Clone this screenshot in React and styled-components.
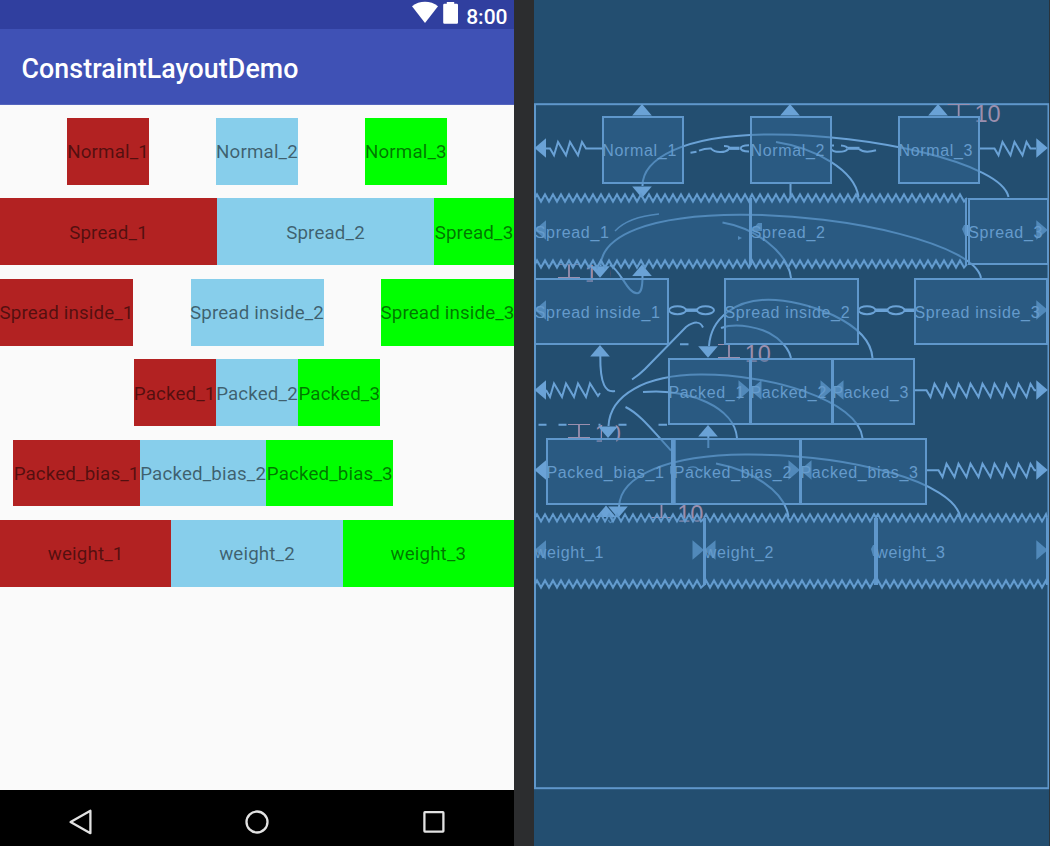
import React from "react";
import styled, { createGlobalStyle } from "styled-components";

const GlobalStyle = createGlobalStyle`
  html, body { margin: 0; padding: 0; background: #2c2d2f; }
  body { overflow: hidden; }
  * { box-sizing: border-box; }
`;

const Editor = styled.main`
  display: flex;
  gap: 20px;
  width: 1050px;
  height: 846px;
  background: #2c2d2f;
  overflow: hidden;
`;

/* ---------- Design preview ---------- */

const Phone = styled.section`
  display: flex;
  flex-direction: column;
  flex: none;
  width: 514px;
  height: 846px;
  background: #fafafa;
  font-family: Roboto, sans-serif;
`;

const StatusBar = styled.header`
  display: flex;
  justify-content: flex-end;
  align-items: flex-start;
  height: 29px;
  padding-right: 6.5px;
  background: #303f9f;
  color: #fff;
`;

const StatusIcons = styled.svg`
  display: block;
  width: 48px;
  height: 29px;
  margin-right: 6px;
`;

const Clock = styled.span`
  padding-top: 5px;
  font-size: 21px;
  font-weight: 500;
  line-height: 24px;
`;

const AppBar = styled.div`
  display: flex;
  align-items: center;
  height: 75.5px;
  padding: 5px 0 0 21.5px;
  background: #3f51b5;
  border-bottom: 1px solid #5565bd;
  color: #fff;
  font-size: 26.77px;
  font-weight: 500;
  letter-spacing: 0.09px;
`;

const Content = styled.div`
  display: flex;
  flex-direction: column;
  flex: 1;
  gap: 13.5px;
  padding-top: 13.5px;
`;

const ChainRow = styled.div`
  display: flex;
  height: 66.9px;
  justify-content: ${(p) => p.$justify || "flex-start"};
  padding-left: ${(p) => p.$indent || 0}px;
`;

const swatches = ["#b22222", "#87ceeb", "#00ff00"];

const Cell = styled.div`
  display: flex;
  align-items: center;
  justify-content: center;
  flex: ${(p) => (p.$width ? "none" : "1 1 0")};
  width: ${(p) => (p.$width ? p.$width + "px" : "auto")};
  padding-top: 2px;
  background: ${(p) => swatches[p.$tone]};
  color: rgba(0, 0, 0, 0.54);
  font-size: 18.74px;
  letter-spacing: 0.15px;
  white-space: nowrap;
`;

const NavBar = styled.nav`
  display: flex;
  justify-content: space-between;
  align-items: center;
  height: 56px;
  padding: 7px 66.5px 0;
  background: #000;
`;

const NavIcon = styled.svg`
  display: block;
  width: 28px;
  height: 28px;
  fill: none;
  stroke: #e2e2e2;
  stroke-width: 2.3;
  stroke-linejoin: round;
`;

const chains = [
  { name: "Normal", justify: "space-evenly", widths: [81.4, 81.4, 81.4] },
  { name: "Spread", widths: [217, 217, 80] },
  { name: "Spread inside", justify: "space-between", widths: [133, 133, 133] },
  { name: "Packed", justify: "center", widths: [82.3, 82.3, 82.3] },
  { name: "Packed_bias", indent: 13.3, widths: [126.6, 126.6, 126.6] },
  { name: "weight", widths: [0, 0, 0] },
];

/* ---------- Blueprint ---------- */

const Blueprint = styled.section`
  position: relative;
  flex: none;
  width: 516px;
  height: 846px;
  background: #234e70;
  font-family: "Liberation Sans", sans-serif;
`;

const Wires = styled.svg`
  position: absolute;
  inset: 0;
  width: 516px;
  height: 846px;
  fill: none;
  stroke: #6aa2d6;
  stroke-width: 2;
`;

const Node = styled.div`
  position: absolute;
  left: ${(p) => p.$x - 534}px;
  top: ${(p) => p.$y}px;
  width: ${(p) => p.$w}px;
  height: ${(p) => p.$h}px;
  display: flex;
  align-items: center;
  padding-top: 3px;
  background: rgba(51, 107, 154, 0.45);
  border: solid #5f97cb;
  border-width: ${(p) => (p.$elastic ? "0 2px" : "2px")};
`;

const NodeLabel = styled.span`
  margin-left: -1.3px;
  color: #659bcc;
  font-size: 16px;
  letter-spacing: 0.68px;
  white-space: nowrap;
`;

const Arrow = ({ x, y, dir, halo }) => {
  const angle = { up: 0, right: 90, down: 180, left: 270 }[dir];
  return (
    <g transform={`translate(${x} ${y}) rotate(${angle})`} stroke="none">
      {halo && <rect x={-halo[1]} y="-5" width={halo[0] + halo[1]} height="18" rx="1" fill="#234e70" />}
      <path d="M0 0L9.8 11.5H-9.8Z" fill="#6aa2d6" />
    </g>
  );
};

const Margin = ({ x, y }) => (
  <g stroke="#9b8fae">
    <path d={`M${x - 11} ${y}H${x + 11}M${x - 11} ${y + 13}H${x + 11}`} strokeWidth="1.2" />
    <path d={`M${x} ${y}V${y + 13}`} strokeWidth="1.8" />
    <text x={x + 15.8} y={y + 17.5} fill="#9b8fae" stroke="none" fontSize="23.5">
      10
    </text>
  </g>
);

const spring = (x0, x1, start, teeth, y) => {
  let d = `M${x0} ${y}H${start}`;
  for (let i = 0; i < teeth; i++) {
    d += `L${start + 4 + i * 12} ${y + 6.7}L${start + 8 + i * 12} ${y - 6.5}`;
  }
  return d + `L${start + teeth * 12} ${y}H${x1}`;
};

const weave = (x0, x1, y) => {
  let d = `M${x0} ${y}`;
  let up = true;
  for (let x = x0 + 2; x <= x1 - 1; x += 4) {
    d += `L${x} ${up ? y - 3.6 : y + 3.6}`;
    up = !up;
  }
  return d + `L${x1} ${y}`;
};

const weaves = [
  [535, 751, 198],
  [750, 967, 198],
  [535, 751, 264],
  [750, 967, 264],
  [535, 705, 517.8],
  [704, 876, 517.8],
  [876, 1047, 517.8],
  [535, 705, 584],
  [704, 876, 584],
  [876, 1047, 584],
];

const nodes = [
  ["Normal_1", 601.5, 115.5, 82, 68],
  ["Normal_2", 749.7, 115.5, 82, 68],
  ["Normal_3", 897.7, 115.5, 82, 68],
  ["Spread_1", 534, 198, 217, 66.5, true],
  ["Spread_2", 750, 198, 217, 66.5, true],
  ["Spread_3", 967.5, 197.5, 81, 67.5],
  ["Spread inside_1", 534, 277.7, 135.3, 67.6],
  ["Spread inside_2", 723.7, 277.7, 135.6, 67.6],
  ["Spread inside_3", 913.7, 277.7, 134.6, 67.6],
  ["Packed_1", 667.7, 357.7, 83, 67.6],
  ["Packed_2", 749.7, 357.7, 83, 67.6],
  ["Packed_3", 831.7, 357.7, 83.5, 67.6],
  ["Packed_bias_1", 545.7, 437.5, 127.7, 67.6],
  ["Packed_bias_2", 673, 437.5, 128, 67.6],
  ["Packed_bias_3", 799.7, 437.5, 127.7, 67.6],
  ["weight_1", 534, 518, 171, 66.5, true],
  ["weight_2", 704, 518, 171.7, 66.5, true],
  ["weight_3", 875.5, 518, 172, 66.5, true],
];

const curves = [
  "M642.5 186C642.5 160 680 135 770 134.5C870 134 1002 163 1008.5 197",
  "M776 142C815 148 855 170 858.5 197",
  "M790.5 183V198",
  "M600.5 266C602 235 650 215 740 214.7C850 214.5 975 245 981 278",
  "M722.5 222.5C755 228 788 252 791 278",
  "M610 265C622 272 627 293 637 293.3C642 293 642.5 285 642.5 276",
  "M709 346C711 318 735 300 768 299.7C805 299.5 870 322 872.5 358",
  "M721 328C735 323 762 326 777 338Q789 348 791 358",
  "M703 327.5Q699 318 686 327L645 369Q639 375 632 379.5",
  "M600.3 356C600 385 606 393 615 391",
  "M608.5 426C610 395 645 375 700 374.6C770 374 858 400 862.5 438",
  "M643 392C690 388 735 408 737 438",
  "M625.5 407C640 414 652 430 671 450.5",
  "M708.3 436V448",
  "M619 507C620 475 670 455 745 454.6C850 454 955 482 960.5 518",
  "M716 463.5C750 470 785 490 788.5 517",
];

const edgeArrows = [148, 230, 310, 390, 470, 550];

const anchors = [
  [642, 104, "up"],
  [790, 104, "up"],
  [938, 104, "up"],
  [600, 277.7, "down", [7, 10]],
  [608, 438, "down", [6, 8]],
  [642, 198, "down"],
  [642, 264.5, "up"],
  [600, 345, "up"],
  [708, 357.7, "down"],
  [708, 425, "up"],
  [606, 505.5, "up"],
  [618, 518, "down"],
  [750, 390, "right"],
  [750, 390, "left"],
  [832, 390, "right"],
  [832, 390, "left"],
  [800, 470, "right"],
  [800, 470, "left"],
  [704, 550, "right"],
  [704, 550, "left"],
];

export default function App() {
  return (
    <Editor>
      <GlobalStyle />
      <Phone>
        <StatusBar>
          <StatusIcons viewBox="0 0 48 29" fill="#fff">
            <path d="M0 6.2C7.5 .4 18.5 .4 26 6.2L13 23Z" />
            <path d="M31.2 5Q31.2 3.8 32.4 3.8H34.8V2H42.2V3.8H44.8Q46 3.8 46 5V22.6Q46 23.8 44.8 23.8H32.4Q31.2 23.8 31.2 22.6Z" />
          </StatusIcons>
          <Clock>8:00</Clock>
        </StatusBar>
        <AppBar>ConstraintLayoutDemo</AppBar>
        <Content>
          {chains.map((chain) => (
            <ChainRow key={chain.name} $justify={chain.justify} $indent={chain.indent}>
              {chain.widths.map((w, i) => (
                <Cell key={i} $tone={i} $width={w}>
                  {`${chain.name}_${i + 1}`}
                </Cell>
              ))}
            </ChainRow>
          ))}
        </Content>
        <NavBar>
          <NavIcon viewBox="0 0 28 28">
            <path d="M3.6 14L23.4 2.8V25.2Z" />
          </NavIcon>
          <NavIcon viewBox="0 0 28 28">
            <circle cx="14" cy="14" r="10.5" />
          </NavIcon>
          <NavIcon viewBox="0 0 28 28">
            <rect x="4.4" y="4.2" width="19" height="19.4" rx=".5" />
          </NavIcon>
        </NavBar>
      </Phone>

      <Blueprint>
        <Wires viewBox="534 0 516 846">
          <rect x="535" y="104.2" width="513.5" height="684" stroke="#5f97cb" strokeWidth="2" />
          <rect x="1049.2" y="0" width=".8" height="846" fill="#2c2d2f" stroke="none" />

          <path d="M538.5 424.8H546.5M558.5 424.8H566.5M598.5 424.8H600.5M618.5 424.8H626.5M658.5 424.8H667M680 344.3H688.5" />

          <Margin x={958.7} y={104.5} />
          <Margin x={569} y={264.5} />
          <Margin x={729} y={344.5} />
          <Margin x={579} y={424.5} />
          <Margin x={661.5} y={504.5} />

          {edgeArrows.map((y) => (
            <g key={y}>
              <Arrow x={534.5} y={y} dir="left" />
              <Arrow x={1047.8} y={y} dir="right" />
            </g>
          ))}
          {anchors.map(([x, y, dir, halo]) => (
            <Arrow key={`${x}${y}${dir}`} x={x} y={y} dir={dir} halo={halo} />
          ))}

          {curves.map((d) => (
            <path key={d} d={d} />
          ))}
          <path d="M615 231Q628 217 659 214" strokeWidth="1.3" />

          <path d={spring(546, 602, 550, 3, 148.5)} />
          <path d={spring(979, 1036, 994.5, 3, 148.5)} />
          <path d="M546 390L550 397L554 383.5L562 397L566 383.5L574 397L578 383.5L586 397L590 383.5L598 396L600 393" />
          <path d={spring(915, 1036, 926.5, 9, 390.3)} />
          <path d={spring(927, 1036, 938.5, 8, 470.3)} />

          <g>
            <ellipse cx="677.5" cy="310.2" rx="8.5" ry="4" />
            <ellipse cx="705.5" cy="310.2" rx="8.5" ry="4" />
            <path d="M686 310.2H697" strokeWidth="3.4" />
            <ellipse cx="867" cy="310.2" rx="8.5" ry="4" />
            <ellipse cx="896" cy="310.2" rx="8.5" ry="4" />
            <path d="M876 310.2H887M904 310.2H914" strokeWidth="3.4" />
            <path d="M690.5 152.7L696.5 151.7M699 150.6Q705 148.4 711 148.6C715 153 725 153 728.5 149.5M724 146Q730 146 729 148.5M749 145.2C738 145 738 151.5 749 151.5" />
            <path d="M728 148.3H739.5" strokeWidth="3.2" />
            <path d="M831 145.5H834M841 145.5Q847 146 847.5 148.5M831 149C833 152.8 845 152.8 847.5 149M859 149C863 152.5 871 151.7 876 150.3" />
            <path d="M847.5 148.3H859.5" strokeWidth="3" />
          </g>

          <path d="M608 516Q612 513 613 518Q611 526 608.5 520M688 468Q695 465.5 698 469Q701 471 703 469.5" strokeWidth="1.2" />

          <g fill="#6aa2d6" stroke="none">
            <path d="M670 466H675V479H673L670 473ZM871 549L873 545H877V556H873ZM962 229L964 225H968V236H965ZM751 231L758 223H762V231ZM738 236L742 238L738 240Z" />
          </g>
        </Wires>

        {nodes.map(([label, x, y, w, h, elastic]) => (
          <Node key={label} $x={x} $y={y} $w={w} $h={h} $elastic={elastic}>
            <NodeLabel>{label}</NodeLabel>
          </Node>
        ))}

        <Wires viewBox="534 0 516 846">
          {weaves.map(([x0, x1, y]) => (
            <path key={`${x0}-${y}`} d={weave(x0, x1, y)} stroke="#639bce" />
          ))}
          <path d="M966 198V264M675 438V504M874.7 518V584" stroke="#5f97cb" strokeWidth="1.4" />
        </Wires>
      </Blueprint>
    </Editor>
  );
}
